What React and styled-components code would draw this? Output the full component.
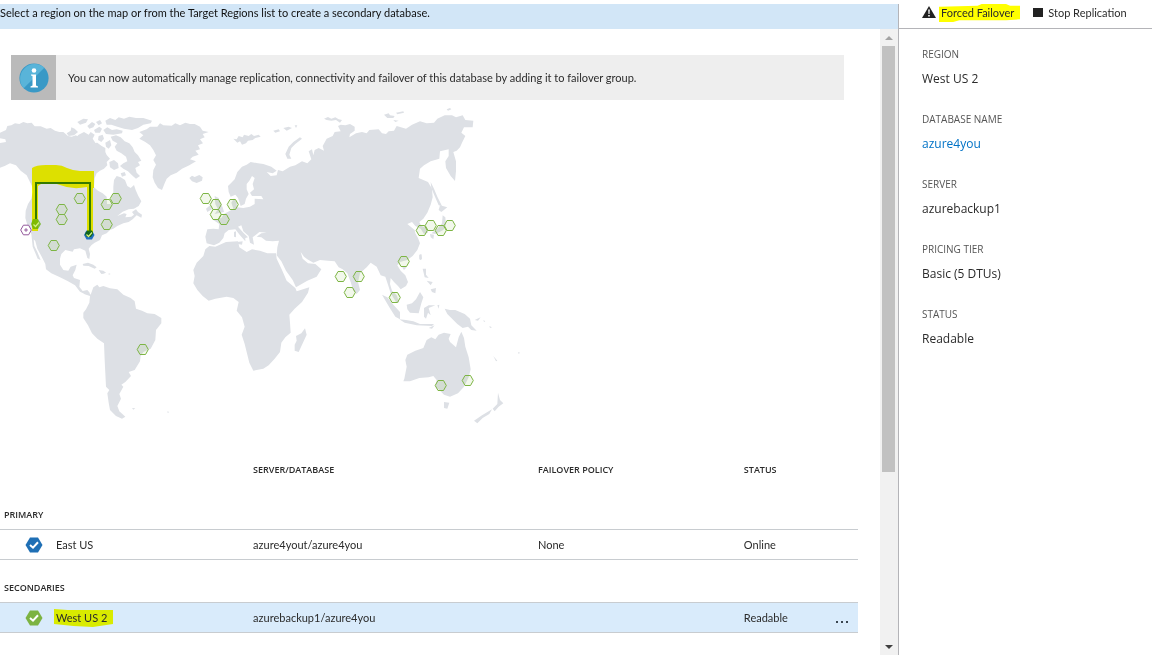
import React from "react";
import styled, { createGlobalStyle } from "styled-components";

const GlobalStyle = createGlobalStyle`
  * {
    box-sizing: border-box;
  }

  body {
    margin: 0;
    background: #fff;
    color: #2b2b2b;
    font-family: Lato, "Open Sans", sans-serif;
    font-size: 11px;
    line-height: 16px;
  }
`;

// every outline is drawn on a grid three times finer than the map
const land = [
  {
    name: "north-america",
    x: 0,
    y: 100,
    d: [
      "M-6 130L18 126L16 118L-6 114L0 98L18 90L22 78L34 76L45 70L58 72L70 66L82 70L95 68L104 79L122 79L140 86L152 84L165 92L178 96L190 96L204 108L215 110L228 106L238 114L250 124L262 122L275 130L292 128L305 138L316 144L316 156L320 165L330 176L320 186L322 196L312 206L300 212L290 220L284 234L282 262L294 272L308 280L320 290L321 312L332 312L334 294L340 280L340 260L342 240L350 228L362 232L375 240L382 258L392 264L402 255L407 270L415 288L424 304L416 318L402 326L386 328L368 335L352 348L372 340L380 342L376 352L394 350L402 344L396 336L408 328L414 336L426 344L424 353L410 346L398 358L386 366L370 370L352 378L340 386L330 390L320 400L306 406L300 420L284 428L274 436L266 446L270 462L268 477L262 474L256 452L240 445L222 448L218 455L196 450L184 462L180 476L180 494L190 510L205 512L212 500L230 494L226 510L218 526L222 534L240 540L238 560L248 573L262 570L270 580L254 582L240 575L225 556L204 544L180 532L154 520L138 508L136 492L124 468L112 446L106 424L101 418L103 438L112 456L122 480L113 476L98 440L94 402L84 382L76 354L77 332L84 312L94 296L98 276L96 258L88 242L80 226L62 212L48 196L30 190L14 198L-6 206Z",
      "M200 100L212 92L214 82L224 86L234 96L222 106L206 108Z",
      "M222 118L236 104L252 96L266 104L272 96L284 104L278 116L286 128L270 134L250 128L236 130Z",
      "M232 66L250 56L264 58L258 68L240 74Z",
      "M262 78L276 66L286 72L280 82L268 86Z",
      "M288 66L300 60L306 70L296 76Z",
      "M282 90L298 80L306 86L300 98L286 98Z",
      "M310 90L322 82L336 90L350 88L368 92L366 100L340 104L318 102Z",
      "M316 62L330 54L346 60L356 52L372 56L388 50L408 54L430 54L456 62L452 70L430 74L414 84L396 90L372 86L352 80L334 74L320 74Z",
      "M296 108L308 104L312 116L304 126L294 120Z",
      "M316 128L330 120L334 136L326 146L318 140Z",
      "M332 110L348 106L362 112L374 124L388 130L398 142L404 156L414 166L424 182L414 186L420 196L406 204L410 218L420 228L408 236L396 226L384 214L370 206L360 198L370 190L382 184L378 170L364 160L350 152L344 140L352 130L338 122Z",
      "M328 186L342 180L354 190L356 204L342 210L330 202Z",
      "M362 220L374 216L378 226L366 230Z",
      "M248 492L264 488L280 494L290 502L284 506L266 498L250 497Z",
      "M296 510L310 512L318 518L304 522Z",
    ],
  },
  {
    name: "greenland",
    x: 100,
    y: 100,
    d: [
      "M118 96L140 88L150 80L172 80L180 70L190 76L215 77L226 70L240 76L256 68L270 72L284 72L300 80L308 92L326 96L308 102L314 112L300 118L309 130L294 136L300 148L286 152L296 164L278 170L270 178L288 184L268 196L246 206L230 218L212 226L200 236L194 250L186 270L174 264L164 248L158 232L160 210L168 194L160 180L168 166L160 150L150 136L136 126L118 116L130 106Z",
      "M268 234L276 227L284 231L298 225L308 232L306 242L290 249L276 244Z",
    ],
  },
  {
    name: "south-america",
    x: 60,
    y: 250,
    d: [
      "M66 124L74 128L84 124L92 134L100 112L112 104L118 112L130 108L150 115L172 118L190 134L212 144L224 154L228 176L246 182L262 190L284 192L304 204L304 220L288 240L286 270L272 296L250 306L242 318L240 334L224 360L206 366L213 378L196 396L184 404L190 410L178 432L183 446L172 468L178 484L196 500L186 506L168 498L150 480L146 458L142 430L148 420L138 410L136 370L134 330L132 280L112 266L96 250L84 226L70 204L70 188L78 178L88 158L90 138L74 133Z",
      "M216 474L226 475L220 479Z",
      "M322 484L328 486L323 489Z",
      "M120 66L138 68L128 71Z",
      "M146 70L152 72L146 74Z",
    ],
  },
  {
    name: "eurasia",
    x: 100,
    y: 100,
    d: [
      "M320 430L316 410L322 388L340 386L356 388L358 372L340 360L364 354L372 342L390 332L400 326L394 308L402 295L410 306L410 322L430 324L450 320L464 312L464 296L490 298L484 288L456 288L450 278L462 268L458 252L464 234L456 228L448 242L440 252L440 268L446 282L438 296L434 312L422 318L414 294L406 284L392 290L386 276L384 258L394 248L404 238L412 216L426 200L440 194L452 186L474 190L490 192L514 200L530 212L518 220L500 216L512 228L530 226L534 210L548 214L570 200L586 196L606 184L622 190L634 178L626 154L636 148L640 166L644 150L656 144L672 152L668 138L680 116L698 108L704 96L722 94L714 78L722 74L736 76L750 72L764 80L764 92L750 102L748 112L768 100L786 96L800 100L808 90L836 88L846 100L858 102L866 94L882 92L890 78L918 86L936 74L960 64L980 70L1002 68L1012 56L1034 46L1056 46L1068 52L1088 46L1096 60L1120 62L1118 82L1092 82L1084 98L1096 108L1086 128L1080 142L1070 152L1060 156L1068 184L1068 214L1065 243L1052 228L1038 204L1036 184L1046 168L1046 148L1020 154L1018 176L992 184L972 196L960 206L956 234L970 240L984 246L996 266L998 292L992 314L982 338L970 356L958 366L964 378L980 384L984 398L972 402L962 386L946 378L936 366L922 372L934 382L944 390L946 400L954 414L960 430L952 450L938 468L922 480L900 486L892 496L902 512L916 526L924 546L918 558L902 568L894 558L882 546L872 534L870 552L876 572L890 586L898 608L888 606L872 580L864 554L856 530L842 526L830 500L812 488L800 502L780 520L774 546L780 570L770 582L760 572L752 546L742 520L728 508L716 502L704 484L684 482L660 480L640 488L622 478L612 470L602 456L608 476L624 490L646 492L664 508L650 530L622 542L588 562L578 540L558 512L544 484L530 466L532 442L537 422L518 424L498 422L484 412L470 410L484 400L500 398L478 396L468 404L458 412L462 434L450 428L446 408L430 394L424 376L414 380L430 398L444 412L436 414L436 424L420 406L406 388L386 390L374 400L370 414L358 428L342 436Z",
      "M344 288L356 294L360 308L368 322L372 336L344 342L354 328L346 312Z",
      "M318 326L332 314L336 328L322 336Z",
      "M402 396L408 394L408 412L402 410Z",
      "M412 426L428 424L426 434L414 432Z",
      "M400 116L410 118L416 108L428 112L432 104L446 108L454 102L462 108L476 104L482 110L466 114L458 120L444 122L438 130L426 134L420 124L412 128Z",
      "M520 92L536 88L540 94L526 98Z",
      "M550 84L566 80L576 84L560 92Z",
      "M584 76L592 76L588 84Z",
      "M556 162L566 140L580 126L600 112L606 116L586 132L574 144L568 164L574 176L562 176Z",
      "M672 56L684 51L694 56L706 52L716 58L726 60L720 68L708 60L694 62L680 60Z",
      "M852 44L866 40L870 46L884 48L880 54L862 54Z",
      "M888 38L910 34L912 38L892 43Z",
      "M880 60L896 62L886 66Z",
      "M1040 28L1050 24L1054 28L1044 32Z",
      "M992 246L1002 266L1012 290L1026 318L1016 316L1004 288L994 264Z",
      "M1020 316L1042 322L1024 336L1016 330Z",
      "M1028 346L1036 352L1038 374L1030 390L1006 402L994 400L1012 386L1026 370Z",
      "M990 402L1002 404L1000 418L992 412Z",
      "M958 466L964 464L964 480L958 478Z",
      "M908 502L918 500L914 508Z",
    ],
  },
  {
    name: "africa",
    x: 100,
    y: 100,
    d: [
      "M328 438L346 440L378 426L414 424L418 442L440 456L456 448L480 452L502 460L528 460L530 476L546 510L560 542L586 564L590 574L628 562L624 578L606 606L584 626L568 644L570 668L572 698L556 712L544 728L540 756L524 776L506 796L490 806L460 812L448 788L434 732L425 704L434 680L426 652L410 632L416 606L400 594L380 590L346 596L326 602L308 588L292 570L280 550L284 528L280 510L290 488L310 468L316 448Z",
      "M615 685L620 704L596 756L584 752L584 734L590 722L588 708L604 700Z",
    ],
  },
  {
    name: "oceania",
    x: 370,
    y: 240,
    d: [
      "M103 416L100 424L120 424L148 414L176 412L190 408L200 420L196 440L208 450L222 464L240 470L264 460L282 440L296 412L302 388L296 352L286 320L282 294L274 275L266 292L258 322L240 306L236 296L242 282L222 278L206 284L196 298L184 292L170 300L160 324L136 332L112 344L106 360L110 380Z",
      "M222 486L238 488L232 506L222 504Z",
      "M384 458L390 480L400 490L386 500L374 514L368 506L382 492Z",
      "M366 508L358 522L338 534L322 550L312 542L336 526Z",
      "M36 164L52 172L70 194L90 216L90 238L76 230L58 202Z",
      "M88 238L108 240L130 244L150 252L192 252L186 258L140 256L104 248Z",
      "M110 194L126 190L138 178L150 156L160 172L154 190L146 220L120 218L112 208Z",
      "M162 204L176 196L196 196L176 204L182 226L174 218L168 236L162 230Z",
      "M224 206L240 210L256 210L284 222L300 236L304 256L320 272L304 270L294 260L278 264L262 252L244 234L232 222Z",
      "M158 86L168 86L168 104L176 114L164 112Z",
      "M170 122L188 126L182 136Z",
      "M182 148L198 144L196 160L186 156Z",
      "M96 82L110 82L102 90Z",
      "M148 44L154 42L156 56L150 60Z",
      "M176 264L194 256L186 266Z",
      "M202 196L208 194L206 206Z",
      "M314 240L332 232L324 242Z",
      "M370 348L382 362L378 364Z",
      "M444 336L450 338L446 342Z",
      "M340 240L346 244L342 246Z",
      "M358 258L366 262L360 264Z",
    ],
  },
];

const regions = [
  [80, 198], [62, 209], [62, 219], [54, 245], [107, 204], [116, 198],
  [107, 224], [206, 198], [216, 204], [216, 214], [224, 219], [233, 204],
  [341, 276], [359, 276], [350, 292], [404, 261], [395, 297], [422, 230],
  [431, 225], [441, 230], [450, 225], [143, 349], [441, 385], [468, 380],
];

const details = [
  { label: "REGION", value: "West US 2" },
  { label: "DATABASE NAME", value: "azure4you", href: "#azure4you" },
  { label: "SERVER", value: "azurebackup1" },
  { label: "PRICING TIER", value: "Basic (5 DTUs)" },
  { label: "STATUS", value: "Readable" },
];

const RegionIcon = ({ color }) => (
  <HexIcon viewBox="0 0 18 16" aria-hidden="true">
    <path d="M5 0.5H13L17.5 8L13 15.5H5L0.5 8Z" fill={color} />
    <path d="M5 8L8 10.7L13 5.3" fill="none" stroke="#fff" strokeWidth="2" />
  </HexIcon>
);

const WorldMap = () => (
  <Map viewBox="0 100 560 340" role="img" aria-label="Replication regions">
    <g fill="#dde0e5">
      {land.map((part) => (
        <g
          key={part.name}
          transform={`translate(${part.x} ${part.y}) scale(${1 / 3})`}
        >
          {part.d.map((d) => (
            <path key={d} d={d} />
          ))}
        </g>
      ))}
    </g>
    {regions.map(([x, y]) => (
      <path
        key={`${x}-${y}`}
        transform={`translate(${x} ${y})`}
        d="M-3 -4.500H2.500L5.300 0.500L2.500 5.500H-3L-5.800 0.500Z"
        fill="#7fba3c"
        fillOpacity="0.1"
        stroke="#7db544"
      />
    ))}
    <g transform="translate(26 230)" stroke="#93579b" fill="none">
      <path d="M-2.6 -4.8H2.6L5.3 0L2.6 4.8H-2.6L-5.3 0Z" fill="#fff" />
      <path d="M-1.8 0H1.8M0 -1.8V1.8" />
    </g>
    <path d="M31 224L33 219H38L41 224L38 229H33Z" fill="#7fba3c" />
    <path
      d="M84 235L86.500 230.500H92L94.500 235L92 239.500H86.500Z"
      fill="#1f6fc0"
    />
    <Marker d="M32 168Q36 165 46 165H56Q62 165 67 168Q74 171 80 171H94V188H93V234H87V187Q72 190 60 185Q50 181 41 184L38 186V231H32Z" />
    <path d="M36 219V183H90V235" fill="none" stroke="#357a00" strokeWidth="2" />
    <path d="M86 231.500H92L93 234L91 237H87L85 234.500Z" fill="#0f6420" />
    <path
      d="M33.500 224.500L35.500 226.500L39 222.500M86.500 234.500L88.500 236.500L92 232.500"
      fill="none"
      stroke="#d4f080"
      strokeWidth="1.2"
    />
  </Map>
);

const App = () => {
  return (
    <Page>
      <GlobalStyle />
      <Main>
        <Hint>
          Select a region on the map or from the Target Regions list to create a
          secondary database.
        </Hint>
        <Body>
          <Content>
            <Notice>
              <NoticeIcon>
                <svg width="30" height="30" viewBox="0 0 30 30">
                  <circle cx="15" cy="15" r="14.600" fill="#3999c6" />
                  <path
                    d="M4.700 25.300A14.600 14.600 0 0 1 25.300 4.700Z"
                    fill="#59b4d9"
                  />
                  <circle cx="15" cy="7.500" r="2.300" fill="#fff" />
                  <path
                    d="M12 11.500H17V22.500L19 23.500V24.500H11.500V23.500L13.500 22.500V13L12 12.500Z"
                    fill="#fff"
                  />
                </svg>
              </NoticeIcon>
              <NoticeText>
                You can now automatically manage replication, connectivity and
                failover of this database by adding it to failover group.
              </NoticeText>
            </Notice>
            <WorldMap />
            <Table>
              <colgroup>
                <Col $width="29.5%" />
                <Col $width="33.2%" />
                <Col $width="24%" />
                <Col $width="auto" />
              </colgroup>
              <thead>
                <tr>
                  <HeadCell aria-label="Region" />
                  <HeadCell>SERVER/DATABASE</HeadCell>
                  <HeadCell>FAILOVER POLICY</HeadCell>
                  <HeadCell>STATUS</HeadCell>
                </tr>
              </thead>
              <tbody>
                <tr>
                  <GroupCell colSpan="4" $first>
                    PRIMARY
                  </GroupCell>
                </tr>
                <Row>
                  <Cell>
                    <Region>
                      <RegionIcon color="#1f6fb5" />
                      East US
                    </Region>
                  </Cell>
                  <Cell>azure4yout/azure4you</Cell>
                  <Cell>None</Cell>
                  <Cell>Online</Cell>
                </Row>
                <tr>
                  <GroupCell colSpan="4">SECONDARIES</GroupCell>
                </tr>
                <Row $selected>
                  <Cell>
                    <Region>
                      <RegionIcon color="#7cb342" />
                      <Marked>
                        <MarkerShape
                          viewBox="0 0 61 18"
                          preserveAspectRatio="none"
                        >
                          <path d="M0 0L14 1H61V15L40 18L20 17L0 15Z" />
                        </MarkerShape>
                        <span>West US 2</span>
                      </Marked>
                    </Region>
                  </Cell>
                  <Cell>azurebackup1/azure4you</Cell>
                  <Cell />
                  <Cell>
                    <StatusLine>
                      Readable
                      <MoreButton aria-label="More">
                        <svg width="14" height="4" viewBox="0 0 14 4">
                          <path
                            d="M1 1H3V3H1ZM6 1H8V3H6ZM11 1H13V3H11Z"
                            fill="#3a4650"
                          />
                        </svg>
                      </MoreButton>
                    </StatusLine>
                  </Cell>
                </Row>
              </tbody>
            </Table>
          </Content>
          <Scrollbar>
            <ScrollButton aria-label="Scroll up" $color="#a3a3a3">
              <svg width="8" height="4" viewBox="0 0 8 4">
                <path d="M0 4L4 0L8 4Z" />
              </svg>
            </ScrollButton>
            <Track>
              <Thumb />
            </Track>
            <ScrollButton aria-label="Scroll down" $color="#404040">
              <svg width="8" height="4" viewBox="0 0 8 4">
                <path d="M0 0H8L4 4Z" />
              </svg>
            </ScrollButton>
          </Scrollbar>
        </Body>
      </Main>
      <Side>
        <Toolbar>
          <ToolButton>
            <svg width="14" height="16" viewBox="0 0 14 16">
              <path d="M7 1L14 13H0Z" fill="#222" />
              <path
                d="M6.200 4.500H7.800L7.500 9H6.500ZM6.200 10H7.800V11.600H6.200Z"
                fill="#fff"
              />
            </svg>
            <Marked>
              <MarkerShape
                viewBox="0 0 80 20"
                preserveAspectRatio="none"
                $color="#ffff00"
              >
                <path d="M0 3L38 2L42 0H66L70 2H80V17L66 18L20 18L14 20H0Z" />
              </MarkerShape>
              <span>Forced Failover</span>
            </Marked>
          </ToolButton>
          <ToolButton>
            <svg width="10" height="10" viewBox="0 0 10 10">
              <path d="M0 0H10V9H0Z" fill="#222" />
            </svg>
            Stop Replication
          </ToolButton>
        </Toolbar>
        <Details>
          {details.map((item) => (
            <div key={item.label}>
              <Label>{item.label}</Label>
              <Value>
                {item.href ? (
                  <ValueLink href={item.href}>{item.value}</ValueLink>
                ) : (
                  item.value
                )}
              </Value>
            </div>
          ))}
        </Details>
      </Side>
    </Page>
  );
};

export default App;

const Page = styled.div`
  display: flex;
  min-height: 100vh;
  padding-top: 4px;
`;

const Main = styled.main`
  flex: 1;
  min-width: 0;
  display: flex;
  flex-direction: column;
`;

const Hint = styled.div`
  background: #d2e6f7;
  color: #111;
  padding: 1px 0 8px;
`;

const Body = styled.div`
  flex: 1;
  display: flex;
`;

const Content = styled.div`
  flex: 1;
  min-width: 0;
  padding: 26px 22px 0 0;
`;

const Notice = styled.div`
  display: flex;
  align-items: center;
  height: 45px;
  margin: 0 14px 0 11px;
  background: #eee;
`;

const NoticeIcon = styled.div`
  align-self: stretch;
  display: flex;
  align-items: center;
  justify-content: center;
  width: 45px;
  background: #bababa;
`;

const NoticeText = styled.p`
  margin: 0;
  padding-left: 12px;
`;

const Map = styled.svg`
  display: block;
  width: 560px;
  max-width: 100%;
`;

const Marker = styled.path`
  fill: #ffff00;
  mix-blend-mode: multiply;
`;

const Table = styled.table`
  width: 100%;
  margin-top: 21px;
  table-layout: fixed;
  border-collapse: collapse;
`;

const Col = styled.col`
  width: ${({ $width }) => $width};
`;

const HeadCell = styled.th`
  padding: 0;
  font-family: "Open Sans", sans-serif;
  font-size: 9px;
  line-height: 18px;
  font-weight: 600;
  text-align: left;
`;

const GroupCell = styled.td`
  height: ${({ $first }) => ($first ? "50px" : "43px")};
  padding: 0 0 5px 4px;
  font-family: "Open Sans", sans-serif;
  font-size: 9px;
  line-height: 18px;
  font-weight: 600;
  vertical-align: bottom;
`;

const Row = styled.tr`
  height: 30px;
  border-top: 1px solid #c8ccd0;
  border-bottom: 1px solid #c8ccd0;
  background: ${({ $selected }) => ($selected ? "#d9ebfb" : "transparent")};
`;

const Cell = styled.td`
  padding: 2px 0 0;
`;

const Region = styled.div`
  display: flex;
  align-items: center;
  gap: 13px;
  padding-left: 25px;
`;

const HexIcon = styled.svg`
  width: 18px;
  height: 16px;
`;

const Marked = styled.span`
  position: relative;

  span {
    position: relative;
  }
`;

const MarkerShape = styled.svg`
  position: absolute;
  top: -1px;
  left: -2px;
  width: calc(100% + 8px);
  height: calc(100% + 2px);
  fill: ${({ $color }) => $color || "#d9eb00"};
`;

const StatusLine = styled.div`
  display: flex;
  align-items: center;
  justify-content: space-between;
  padding-right: 9px;
`;

const MoreButton = styled.button`
  display: flex;
  align-items: flex-end;
  height: 12px;
  border: 0;
  padding: 0;
  background: none;
  cursor: pointer;
`;

const Scrollbar = styled.div`
  display: flex;
  flex-direction: column;
  width: 18px;
  background: #f1f1f1;
`;

const ScrollButton = styled.button`
  display: flex;
  align-items: center;
  justify-content: center;
  height: 17px;
  border: 0;
  padding: 0;
  background: none;
  fill: ${({ $color }) => $color};
`;

const Track = styled.div`
  flex: 1;
  padding: 0 3px 0 2px;
`;

const Thumb = styled.div`
  height: 72%;
  background: #c1c1c1;
`;

const Side = styled.aside`
  width: 254px;
  border-left: 1px solid #b4b4b8;
`;

const Toolbar = styled.div`
  display: flex;
  gap: 19px;
  height: 25px;
  padding: 1px 0 0 23px;
  border-bottom: 1px solid #b4b4b8;
`;

const ToolButton = styled.button`
  display: flex;
  align-items: center;
  gap: 5px;
  height: 16px;
  border: 0;
  padding: 0;
  background: none;
  color: inherit;
  font: inherit;
  white-space: nowrap;
  cursor: pointer;
`;

const Details = styled.dl`
  display: grid;
  gap: 21px;
  margin: 0;
  padding: 16px 23px;
  font-family: "Open Sans", sans-serif;
`;

const Label = styled.dt`
  font-size: 10px;
  line-height: 18px;
  color: #555;
`;

const Value = styled.dd`
  margin: 5px 0 0;
  font-size: 12px;
  line-height: 21px;
`;

const ValueLink = styled.a`
  color: #0072c6;
  text-decoration: none;
`;
